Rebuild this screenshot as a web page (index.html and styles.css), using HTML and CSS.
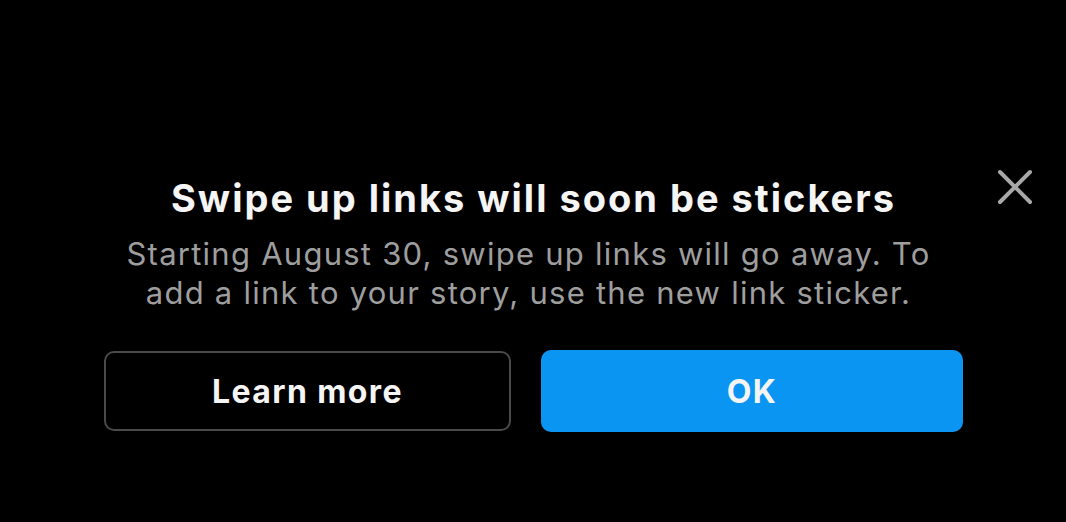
FILE: index.html
```html
<!DOCTYPE html>
<html lang="en">
<head>
  <meta charset="UTF-8" />
  <meta name="viewport" content="width=device-width, initial-scale=1.0"/>
  <title>Swipe up links</title>
  <link rel="stylesheet" href="styles.css">
</head>
<body>
  <div class="sheet">
    <!-- Close -->
    <button class="close-btn" aria-label="Close">
      <svg width="36" height="36" viewBox="0 0 36 36">
        <path d="M3 3 L33 33 M33 3 L3 33" stroke="#a8a8a8" stroke-width="4" stroke-linecap="round" fill="none"/>
      </svg>
    </button>

    <h1 class="sheet-title">Swipe up links will soon be stickers</h1>
    <p class="sheet-text">Starting August 30, swipe up links will go away. To<br>add a link to your story, use the new link sticker.</p>

    <div class="button-row">
      <button class="sheet-button secondary">Learn more</button>
      <button class="sheet-button primary">OK</button>
    </div>
  </div>
</body>
</html>
```

FILE: styles.css
```css
* {
  box-sizing: border-box;
}

body {
  margin: 0;
  padding: 0;
  background-color: #000;
  color: #fff;
  font-family: Inter, "Liberation Sans", Arial, sans-serif;
  height: 100vh;
  overflow: hidden;
}

.sheet {
  position: relative;
  padding: 171px 103px 0 104px;
  display: flex;
  flex-direction: column;
  align-items: center;
}

.close-btn {
  position: absolute;
  top: 169px;
  right: 33px;
  background: none;
  border: none;
  padding: 0;
  cursor: pointer;
}

.sheet-title {
  margin: 0;
  font-size: 38px;
  font-weight: bold;
  line-height: 54px;
  letter-spacing: 2px;
  color: #f5f5f5;
}

.sheet-text {
  margin: 9px 0 0;
  padding-right: 10px;
  font-size: 31px;
  line-height: 39px;
  letter-spacing: 1.25px;
  color: #9e9e9e;
  text-align: center;
}

.button-row {
  margin-top: 38px;
  width: 100%;
  display: flex;
  gap: 30px;
  align-items: center;
}

.sheet-button {
  font-family: inherit;
  font-size: 32px;
  font-weight: bold;
  letter-spacing: 1.4px;
  color: #f5f5f5;
  border-radius: 10px;
  cursor: pointer;
}

.secondary {
  width: 407px;
  height: 80px;
  background: #000;
  border: 2px solid #4a4a4a;
}

.primary {
  flex: 1;
  height: 82px;
  background: #0b95f2;
  border: none;
}
```
